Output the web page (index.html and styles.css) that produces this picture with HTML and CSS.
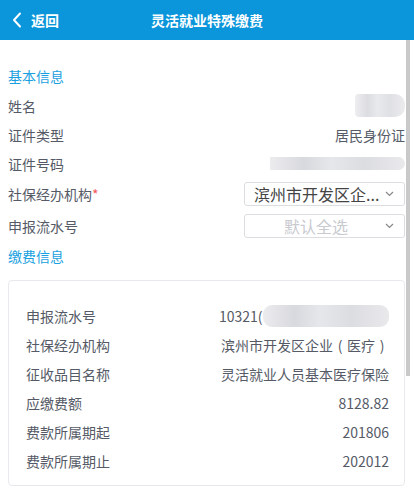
FILE: index.html
```html
<!DOCTYPE html>
<html lang="zh-CN">
<head>
    <meta charset="UTF-8">
    <meta name="viewport" content="width=device-width, initial-scale=1.0">
    <title>灵活就业特殊缴费</title>
    <link rel="stylesheet" href="styles.css">
</head>
<body>
    <div class="header">
        <div class="back">
            <svg width="10" height="16" viewBox="0 0 10 16"><path d="M8 1.5 L2 8 L8 14.5" fill="none" stroke="#fff" stroke-width="2" stroke-linecap="round" stroke-linejoin="round"/></svg>
            <span>返回</span>
        </div>
        <div class="title">灵活就业特殊缴费</div>
    </div>
    <div class="page">
        <div class="section-title">基本信息</div>
        <div class="row">
            <span class="label">姓名</span>
            <span class="blur blur-name"></span>
        </div>
        <div class="row">
            <span class="label">证件类型</span>
            <span class="value">居民身份证</span>
        </div>
        <div class="row">
            <span class="label">证件号码</span>
            <span class="blur blur-id"></span>
        </div>
        <div class="row select-row">
            <span class="label">社保经办机构<i class="req">*</i></span>
            <div class="select">
                <span class="select-text">滨州市开发区企...</span>
                <svg class="chev" width="9" height="6" viewBox="0 0 9 6"><path d="M1 1 L4.5 4.5 L8 1" fill="none" stroke="#888" stroke-width="1.2"/></svg>
            </div>
        </div>
        <div class="row select-row">
            <span class="label">申报流水号</span>
            <div class="select">
                <span class="select-text placeholder">默认全选</span>
                <svg class="chev" width="9" height="6" viewBox="0 0 9 6"><path d="M1 1 L4.5 4.5 L8 1" fill="none" stroke="#888" stroke-width="1.2"/></svg>
            </div>
        </div>
        <div class="section-title">缴费信息</div>
        <div class="card">
            <div class="row">
                <span class="label">申报流水号</span>
                <span class="value serial">10321(<span class="blur blur-serial"></span></span>
            </div>
            <div class="row">
                <span class="label">社保经办机构</span>
                <span class="value">滨州市开发区企业<span class="paren">(</span>医疗<span class="paren">)</span></span>
            </div>
            <div class="row">
                <span class="label">征收品目名称</span>
                <span class="value">灵活就业人员基本医疗保险</span>
            </div>
            <div class="row">
                <span class="label">应缴费额</span>
                <span class="value">8128.82</span>
            </div>
            <div class="row">
                <span class="label">费款所属期起</span>
                <span class="value">201806</span>
            </div>
            <div class="row">
                <span class="label">费款所属期止</span>
                <span class="value">202012</span>
            </div>
        </div>
    </div>
    <div class="scrollbar"></div>
</body>
</html>
```

FILE: styles.css
```css
body {
    margin: 0;
    padding: 0;
    background-color: #fff;
    font-family: "Noto Sans CJK SC", "Noto Sans", sans-serif;
    font-size: 14px;
    color: #555a66;
    overflow: hidden;
}
.header {
    height: 40px;
    background-color: #0b95da;
    color: #fff;
    display: flex;
    align-items: center;
    position: relative;
}
.back {
    display: flex;
    align-items: center;
    gap: 9px;
    padding-left: 12px;
    font-size: 14px;
    font-weight: bold;
}
.title {
    position: absolute;
    left: 0;
    right: 0;
    text-align: center;
    font-size: 14px;
    font-weight: bold;
    pointer-events: none;
}
.page {
    width: 397px;
    padding: 22px 0 0 8px;
}
.section-title {
    color: #1a9fe0;
    line-height: 29px;
}
.row {
    display: flex;
    justify-content: space-between;
    align-items: center;
    height: 29px;
}
.select-row {
    height: 32px;
}
.value {
    color: #555a66;
}
.paren {
    display: inline-block;
    width: 14px;
    text-align: center;
}
.req {
    font-style: normal;
    color: #f5595b;
}
.select {
    width: 140px;
    height: 22px;
    border: 1px solid #dcdde0;
    border-radius: 3px;
    display: flex;
    align-items: center;
    justify-content: space-between;
    padding: 0 10px 0 9px;
}
.select-text {
    font-size: 16px;
    color: #444;
    line-height: 22px;
}
.select-text.placeholder {
    color: #c8cacf;
    margin-left: 30px;
}
.blur {
    display: inline-block;
    background: linear-gradient(90deg, #ececef 0%, #d8d9de 25%, #e6e7ea 45%, #dcdde1 70%, #e9e9ec 100%);
}
.blur-name {
    width: 50px;
    height: 23px;
    border-radius: 4px 10px 10px 4px;
    opacity: 0.9;
}
.blur-id {
    width: 135px;
    height: 13px;
    border-radius: 0 7px 7px 0;
}
.card {
    margin-top: 9px;
    border: 1px solid #e8e9ec;
    border-radius: 4px;
    padding: 20px 15px 10px 17px;
}
.serial {
    display: flex;
    align-items: center;
    width: 170px;
}
.blur-serial {
    width: 126px;
    height: 22px;
    border-radius: 9px;
}
.scrollbar {
    position: absolute;
    left: 406px;
    top: 40px;
    width: 4px;
    height: 336px;
    background-color: #c9c9c9;
}
```
